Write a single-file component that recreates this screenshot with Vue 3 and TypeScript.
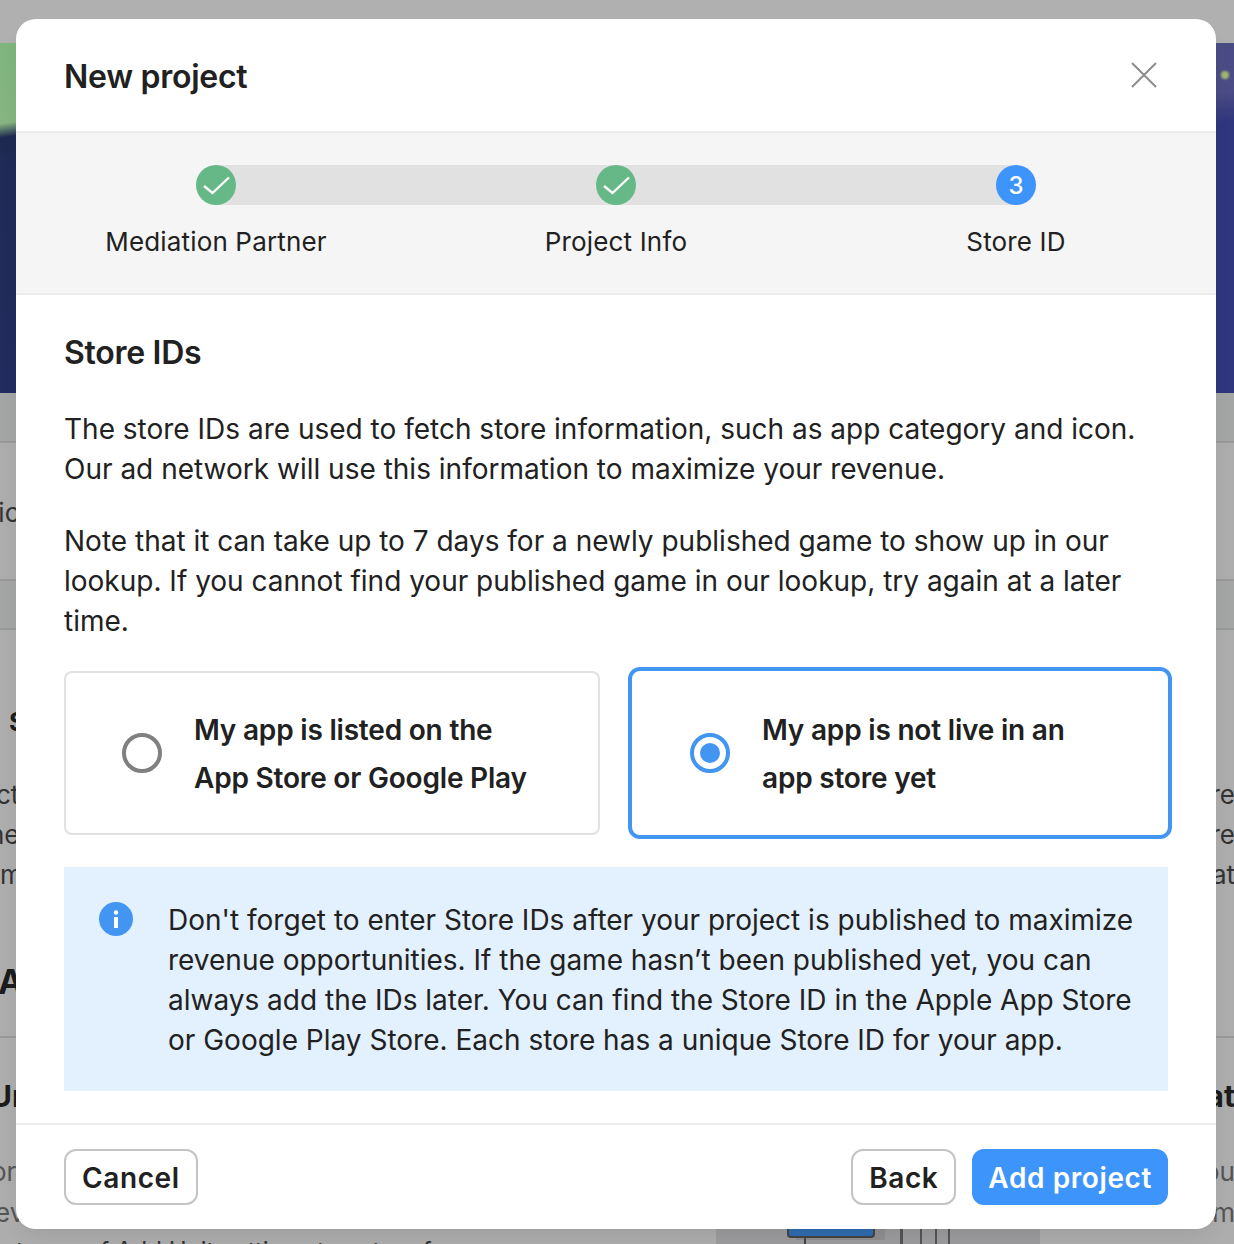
<script setup lang="ts">
interface Step { label: string; done: boolean; num: number }
const steps: Step[] = [
  { label: 'Mediation Partner', done: true, num: 1 },
  { label: 'Project Info', done: true, num: 2 },
  { label: 'Store ID', done: false, num: 3 },
]
</script>

<template>
  <div class="page">
    <div class="backdrop">
      <div class="top-gap"></div>
      <div class="hero"><i class="hero-glow"></i><i class="hero-dot"></i></div>
      <div class="band"></div>
      <div class="row-tall"><span class="frag">uic</span></div>
      <div class="band second-band"></div>
      <div class="content">
        <div class="sides h-s"><b class="head-frag s-frag">S</b></div>
        <div class="sides l1"><span class="ct">ct</span><span>re</span></div>
        <div class="sides l2"><span class="he">he</span><span>re</span></div>
        <div class="sides l2"><span>m</span><span>at</span></div>
        <div class="sides h-a"><b class="head-a">A</b></div>
        <div class="rule"></div>
        <div class="sides h-u"><b class="head-frag ur">Ur</b><b class="head-frag">at</b></div>
        <div class="sides l3"><span class="or">or</span><span>ou</span></div>
        <div class="sides l2 l4"><span class="ev">ev</span><span>m</span></div>
        <div class="bottom-line">
          <span class="bottom-text">types of Add Unit settings to set up for your</span>
          <div class="art">
            <i class="art-shadow"></i>
            <i class="art-blue"></i>
            <i class="art-stem"></i>
            <i class="art-bar b1"></i>
            <i class="art-bar b2"></i>
            <i class="art-bar b3"></i>
            <i class="art-bar b4"></i>
          </div>
        </div>
      </div>
    </div>

    <div class="modal">
      <header class="modal-head">
        <h1>New project</h1>
        <svg class="close" width="28" height="28" viewBox="0 0 28 28" fill="none">
          <path d="M2 2L26 26M26 2L2 26" stroke="#8c8c8c" stroke-width="2" />
        </svg>
      </header>

      <section class="stepper">
        <div class="track">
          <div class="line"></div>
          <div v-for="s in steps" :key="s.label" class="step">
            <div class="dot" :class="{ done: s.done }">
              <svg v-if="s.done" width="40" height="40" viewBox="0 0 40 40" fill="none">
                <path d="M8 21L16.5 28L33 12.5" stroke="#fff" stroke-width="2.4" />
              </svg>
              <span v-else>{{ s.num }}</span>
            </div>
            <div class="step-label">{{ s.label }}</div>
          </div>
        </div>
      </section>

      <main class="body">
        <h2>Store IDs</h2>
        <p class="copy first">The store IDs are used to fetch store information, such as app category and icon.<br />Our ad network will use this information to maximize your revenue.</p>
        <p class="copy second">Note that it can take up to 7 days for a newly published game to show up in our<br />lookup. If you cannot find your published game in our lookup, try again at a later<br />time.</p>

        <div class="choices">
          <div class="choice">
            <span class="radio"></span>
            <span class="choice-text">My app is listed on the<br />App Store or Google Play</span>
          </div>
          <div class="choice active">
            <span class="radio on"><i></i></span>
            <span class="choice-text">My app is not live in an<br />app store yet</span>
          </div>
        </div>

        <div class="notice">
          <svg class="info" width="34" height="34" viewBox="0 0 34 34">
            <circle cx="17" cy="17" r="17" fill="#4295f0" />
            <circle cx="17" cy="10.5" r="2.2" fill="#fff" />
            <rect x="15" y="15" width="4" height="11" fill="#fff" />
          </svg>
          <p>Don't forget to enter Store IDs after your project is published to maximize<br />revenue opportunities. If the game hasn’t been published yet, you can<br />always add the IDs later. You can find the Store ID in the Apple App Store<br />or Google Play Store. Each store has a unique Store ID for your app.</p>
        </div>
      </main>

      <footer class="foot">
        <button class="btn">Cancel</button>
        <div class="foot-right">
          <button class="btn back">Back</button>
          <button class="btn primary">Add project</button>
        </div>
      </footer>
    </div>
  </div>
</template>

<style>
html, body { margin: 0; background: #adadad; }
</style>

<style scoped>
* { box-sizing: border-box; }
.page {
  position: relative;
  width: 1234px;
  height: 1244px;
  overflow: hidden;
  font-family: Inter, "Liberation Sans", sans-serif;
  color: #212121;
}
.backdrop { height: 1244px; background: #adadad; overflow: hidden; color: #2a2a2a; }
.top-gap { height: 43px; background: #b0b0b0; }
.hero {
  position: relative;
  height: 350px;
  overflow: hidden;
  background: linear-gradient(180deg, #1f2a52 0%, #222c5f 100%);
}
.hero::after {
  content: "";
  position: absolute;
  inset: 0 0 0 auto;
  width: 20px;
  background: linear-gradient(174deg, #4b4c85 0, #4b4c85 50px, #30367d 80px, #30367d 100%);
}
.hero-glow {
  position: absolute;
  left: 0;
  top: 0;
  width: 16px;
  height: 110px;
  background: linear-gradient(172deg, #7fb57d 0, #86b580 80px, #1f2a52 94px);
}
.hero-dot {
  position: absolute;
  z-index: 1;
  left: 1221px;
  top: 28px;
  width: 8px;
  height: 8px;
  border-radius: 50%;
  background: #9fb86b;
  filter: blur(1px);
}
.band { height: 50px; background: #a4a5a5; border-bottom: 2px solid #989898; }
.second-band { height: 51px; border-top: 2px solid #989898; }
.row-tall { height: 136px; padding-top: 54px; font-size: 26px; line-height: 32px; }
.frag { margin-left: -17px; display: block; color: #333; }
.content { display: flex; flex-direction: column; }
.sides { display: flex; justify-content: space-between; font-size: 26px; line-height: 40px; color: #333; }
.sides > :last-child { margin-right: -1px; }
.h-s { margin-top: 72px; }
.head-frag { font-weight: 700; color: #1c1c1c; }
.s-frag { margin-left: 9px; }
.l1 { margin-top: 33px; }
.ct { margin-left: -4px; }
.he { margin-left: -11px; }
.h-a { margin-top: 67px; font-size: 34px; }
.head-a { font-weight: 700; color: #1c1c1c; margin-left: -2px; }
.rule { margin-top: 34px; height: 2px; background: #989898; }
.h-u { margin-top: 38px; font-size: 30px; }
.ur { margin-left: -10px; }
.l3 { margin-top: 36px; color: #555; }
.or { margin-left: -9px; }
.l4 { margin-top: 1px; color: #555; }
.ev { margin-left: -5px; }
.bottom-line { position: relative; height: 30px; margin-top: 3px; font-size: 24px; line-height: 30px; color: #333; }
.bottom-text { margin-left: 16px; white-space: nowrap; }
.art { position: absolute; left: 716px; top: -8px; width: 324px; height: 23px; background: #9c9c9e; }
.art-shadow { position: absolute; left: 80px; top: 0; width: 89px; height: 12px; background: #8f8f90; }
.art-blue { position: absolute; left: 71px; top: 0; width: 88px; height: 10px; background: #2f6db0; border: 2px solid #444; border-top: 0; border-radius: 0 0 4px 4px; }
.art-stem { position: absolute; left: 88px; top: 10px; width: 2px; height: 13px; background: #444; }
.art-bar { position: absolute; top: 0; width: 2px; height: 23px; background: #555; }
.b1 { left: 184px; width: 3px; }
.b2 { left: 204px; }
.b3 { left: 219px; }
.b4 { left: 232px; }

.modal {
  position: absolute;
  left: 16px;
  top: 19px;
  width: 1200px;
  height: 1210px;
  background: #fff;
  border-radius: 20px;
  display: flex;
  flex-direction: column;
  overflow: hidden;
  box-shadow: 0 12px 24px -8px rgba(0, 0, 0, 0.1);
}
.modal-head {
  height: 114px;
  flex: none;
  padding: 4px 48px 0;
  display: flex;
  align-items: center;
  justify-content: space-between;
  border-bottom: 2px solid #ececec;
}
.modal-head h1 { margin: 0; font-size: 32px; font-weight: 600; line-height: 40px; letter-spacing: -0.28px; }
.close { margin-right: 10px; margin-top: -4px; }
.stepper {
  height: 162px;
  flex: none;
  background: #f5f5f5;
  border-bottom: 2px solid #ececec;
  padding-top: 32px;
}
.track { position: relative; display: grid; grid-template-columns: repeat(3, 400px); }
.line { position: absolute; left: 200px; width: 800px; top: 0; height: 40px; background: #e1e1e1; }
.step { position: relative; display: flex; flex-direction: column; align-items: center; }
.dot {
  width: 40px;
  height: 40px;
  border-radius: 50%;
  background: #3d94fa;
  color: #fff;
  display: flex;
  align-items: center;
  justify-content: center;
  font-size: 24px;
  font-weight: 500;
}
.dot.done { background: #66b986; }
.step-label { margin-top: 21px; font-size: 26px; line-height: 32px; font-weight: 400; letter-spacing: 0.15px; white-space: nowrap; }
.body { flex: 1; padding: 0 48px; }
.body h2 { margin: 38px 0 0; font-size: 32px; line-height: 40px; font-weight: 600; letter-spacing: -0.28px; }
.copy { margin: 0; font-size: 28px; line-height: 40px; white-space: nowrap; }
.first { margin-top: 36px; }
.second { margin-top: 32px; }
.choices { display: flex; justify-content: space-between; align-items: center; width: 1108px; margin-top: 26px; }
.choice {
  width: 536px;
  height: 164px;
  border: 2px solid #e1e1e1;
  border-radius: 8px;
  display: flex;
  align-items: center;
  padding-left: 56px;
  gap: 32px;
}
.choice.active { width: 544px; height: 172px; border: 4px solid #4295f0; border-radius: 12px; padding-left: 58px; }
.radio {
  width: 40px;
  height: 40px;
  flex: none;
  border: 4px solid #808080;
  border-radius: 50%;
  display: flex;
  align-items: center;
  justify-content: center;
}
.radio.on { border-color: #4295f0; }
.radio.on i { width: 20px; height: 20px; border-radius: 50%; background: #4295f0; }
.choice-text { padding-top: 2px; font-size: 28px; line-height: 48px; font-weight: 600; white-space: nowrap; letter-spacing: -0.2px; }
.notice {
  margin-top: 28px;
  width: 1104px;
  height: 224px;
  background: #e3f0fd;
  padding: 33px 32px 0 35px;
  display: flex;
  gap: 35px;
}
.info { flex: none; margin-top: 2px; }
.notice p { margin: 0; font-size: 28px; line-height: 40px; white-space: nowrap; }
.foot {
  height: 106px;
  flex: none;
  border-top: 2px solid #ececec;
  padding: 24px 48px 0;
  display: flex;
  justify-content: space-between;
  align-items: flex-start;
}
.foot-right { display: flex; gap: 16px; }
.btn {
  height: 56px;
  padding: 2px 16px 0;
  border: 2px solid #c4c4c4;
  border-radius: 12px;
  background: #fff;
  color: #212121;
  font: 600 28px/32px Inter, "Liberation Sans", sans-serif;
  letter-spacing: 0.6px;
}
.btn.primary { padding: 2px 14px 0; background: #3d94fa; border-color: #3d94fa; color: #fff; }
</style>
